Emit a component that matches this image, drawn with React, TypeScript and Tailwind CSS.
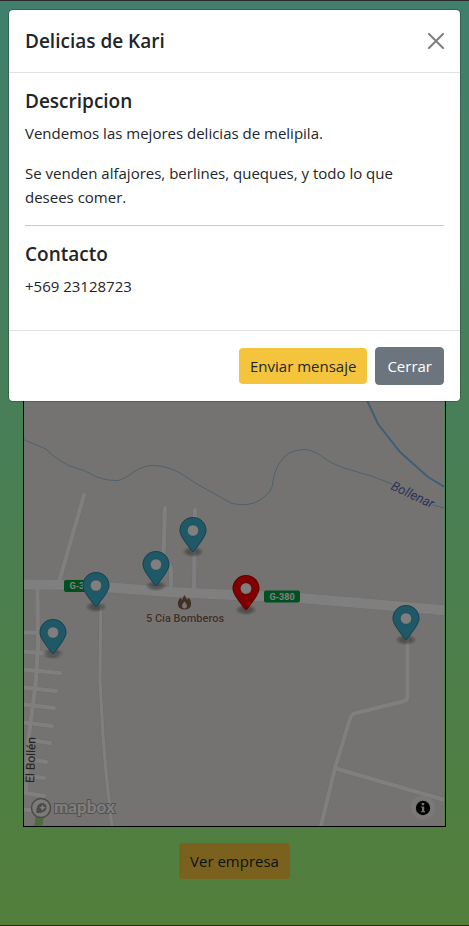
import React from "react";

const MARKERS = [
  { x: 179.5, y: 517, color: "#3fb1ce" },
  { x: 142.5, y: 551, color: "#3fb1ce" },
  { x: 82.5, y: 572, color: "#3fb1ce" },
  { x: 232.5, y: 575, color: "#ff0000" },
  { x: 392.5, y: 605, color: "#3fb1ce" },
  { x: 39.5, y: 619, color: "#3fb1ce" },
];

const ROADS = [
  { d: "M84 495 L59 582", w: 4 },
  { d: "M165 508 L163.500 556 L168 563 Q171 566 171 571 L171 590", w: 4 },
  { d: "M195 510 L194 590", w: 4 },
  { d: "M101 590 L100 680 L103 735 L106 772 L112 828", w: 3 },
  { d: "M37.500 588 L38 645 L36 680 L32 712 L28 742 L26 790", w: 4 },
  { d: "M20 632 L40 633", w: 4 },
  { d: "M20 651 L60 655", w: 4 },
  { d: "M20 669 L60 673", w: 4 },
  { d: "M20 687 L56 691", w: 4 },
  { d: "M20 704 L54 708", w: 4 },
  { d: "M20 722 L52 726", w: 4 },
  { d: "M30 740 L50 743", w: 4 },
  { d: "M28 759 L46 762", w: 4 },
  { d: "M28 776 L44 778", w: 4 },
  { d: "M20 792 L44 796", w: 4 },
  { d: "M20 809 L30 810", w: 4 },
  { d: "M407.500 612 L407.500 695 Q408 700 403 701.500 L356 713 Q351 714 350 719 L335 768 L320 830", w: 4 },
  { d: "M336 768.500 L448 801", w: 4 },
  { d: "M20 584.500 L80 585 L130 589 L170 592 L300 598 L448 610.500", w: 10 },
];

function Marker({ x, y, color }: { x: number; y: number; color: string }) {
  return (
    <g transform={`translate(${x} ${y})`}>
      {[10.5, 9.5, 8.5, 7.5, 6.5, 5.5].map((r) => (
        <ellipse key={r} cx="13.5" cy="34.8" rx={r} ry={r / 2} fill="#000" opacity="0.06" />
      ))}
      <path
        fill={color}
        d="M27 13.500C27 19.070 20.250 27 14.750 34.500C14.020 35.500 12.980 35.500 12.250 34.500C6.750 27 0 19.220 0 13.500C0 6.040 6.040 0 13.500 0C20.960 0 27 6.040 27 13.500Z"
      />
      <path
        fill="none"
        stroke="#000"
        strokeOpacity="0.25"
        d="M26.500 13.500C26.500 18.800 20 26.500 14.350 34.200C13.900 34.800 13.100 34.800 12.650 34.200C7 26.500 .5 18.900 .5 13.500C.5 6.300 6.300 .5 13.500 .5C20.700 .5 26.500 6.300 26.500 13.500Z"
      />
      <circle cx="13.500" cy="13.500" r="5.500" fill="#fff" stroke="#000" strokeOpacity="0.15" />
    </g>
  );
}

function Shield({ x, y }: { x: number; y: number }) {
  return (
    <g>
      <rect x={x} y={y} width="36" height="12" rx="2" fill="#00a042" />
      <text
        x={x + 18}
        y={y + 9}
        textAnchor="middle"
        fill="#fff"
        fontSize="9"
        fontWeight="700"
        className="font-[Roboto,sans-serif]"
      >
        G-380
      </text>
    </g>
  );
}

function MapView() {
  return (
    <svg
      viewBox="24 326 420 500"
      preserveAspectRatio="xMidYMax slice"
      className="block h-[500px] w-full bg-[#eae6e2]"
      role="img"
      aria-label="Mapa"
    >
      <g fill="none" strokeLinecap="round" strokeLinejoin="round">
        <path
          stroke="#9cc3dc"
          d="M20 438L46 449C54 457 60 461 70 466L84 470.500L97 477Q109 481 118 480.500Q125 479 135 471Q145 465 155 465.500Q167 466 180 473L197 484L232 503.500Q250 507 260 500Q273 492 273 481Q275 467 284 457Q293 449 306 449.500Q316 451 327 460Q335 465 344 468L373 476.500L392 484M433 505L448 509"
        />
        <path stroke="#80bce4" strokeWidth="2" d="M364 394L378 424L400 452L428 477L448 489" />
        <path stroke="#9cd67c" strokeWidth="8" strokeLinecap="butt" d="M40 812L38 830" />
        {ROADS.map((r) => (
          <path key={r.d} d={r.d} stroke="#dadae2" strokeWidth={r.w + 1} />
        ))}
        {ROADS.map((r) => (
          <path key={r.d} d={r.d} stroke="#fff" strokeWidth={r.w} />
        ))}
      </g>

      <g className="font-[Roboto,sans-serif]">
        <text
          transform="translate(390 489) rotate(25)"
          fontSize="13"
          fontStyle="italic"
          fill="#5868b8"
        >
          Bollenar
        </text>
        <text
          transform="translate(34 783) rotate(-88)"
          fontSize="12"
          fill="#444"
          stroke="#eae6e2"
          strokeWidth="1"
          paintOrder="stroke"
        >
          El Bollén
        </text>
        <text
          x="185"
          y="622"
          textAnchor="middle"
          fontSize="11"
          fontWeight="500"
          fill="#84604c"
          stroke="#f0ece8"
          strokeWidth="2"
          paintOrder="stroke"
        >
          5 Cía Bomberos
        </text>
      </g>

      <path
        fill="#84604c"
        fillRule="evenodd"
        d="M184.500 595C185.500 596.500 186.500 598 187 600L188.500 597.500C190.500 600 191.500 602 191 605C190.500 608 188 609.500 184.500 609.500C181 609.500 178.500 608 178 605C177.500 602 178.500 600 180.500 597.500L182 600C182.500 598 183.500 596.500 184.500 595ZM184.500 601.500C183 603.500 182 604.500 182 606C182 607.500 183 608.500 184.500 608.500C186 608.500 187 607.500 187 606C187 604.500 186 603.500 184.500 601.500Z"
      />

      <Shield x={64} y={580} />
      <Shield x={264} y={590.5} />
      {MARKERS.map((m) => (
        <Marker key={m.x} {...m} />
      ))}

      <g>
        <circle cx="41" cy="808" r="9.500" fill="#f8f6f4" stroke="#989694" strokeWidth="1.500" />
        <path
          fill="#989694"
          d="M36.500 813C36 808.500 37 803.500 42 803C45 803 46.500 805 46.500 807.500C46.500 812 41 813.500 36.500 813Z"
        />
        <path fill="#fff" d="M42.500 804.500L43.500 806.800L45.800 807.800L43.500 808.800L42.500 811L41.500 808.800L39.200 807.800L41.500 806.800Z" />
        <text
          x="54"
          y="813"
          fontSize="17"
          fontWeight="900"
          fill="#ffffff"
          stroke="#a6a4a2"
          strokeWidth="2"
          strokeLinejoin="round"
          paintOrder="stroke"
          className="font-[Lato,sans-serif]"
        >
          mapbox
        </text>
      </g>

      <g>
        <circle cx="423" cy="807.500" r="12" fill="#fff" fillOpacity="0.5" />
        <circle cx="423" cy="808" r="7.200" fill="#000" />
        <path fill="#e8e6e4" d="M421.800 803H424.200V805.200H421.800ZM421.200 806.500H424.200V811H425V812.200H421.200V811H422V807.500H421.200Z" />
      </g>
    </svg>
  );
}

function CompanyModal() {
  return (
    <div
      role="dialog"
      aria-modal="true"
      aria-labelledby="modal-title"
      className="mx-2 mt-2 rounded-[5px] border border-black/20 bg-white bg-clip-padding text-[#212529]"
    >
      <header className="flex items-center justify-between border-b border-[#dee2e6] p-4">
        <h1 id="modal-title" className="text-[19px] leading-[30px] font-semibold">
          Delicias de Kari
        </h1>
        <button type="button" aria-label="Cerrar ventana" className="text-[#7f7f7f]">
          <svg viewBox="0 0 16 16" className="h-4 w-4" fill="none" stroke="currentColor" strokeWidth="2" strokeLinecap="round">
            <path d="M1 1L15 15M15 1L1 15" />
          </svg>
        </button>
      </header>

      <div className="p-4 text-[15px] leading-6">
        <h2 className="mb-2 text-[19px] leading-6 font-semibold">Descripcion</h2>
        <p className="mb-4">Vendemos las mejores delicias de melipila.</p>
        <p className="mb-4">Se venden alfajores, berlines, queques, y todo lo que desees comer.</p>
        <hr className="mb-4 border-[#c8c8c9]" />
        <h2 className="mb-2 text-[19px] leading-6 font-semibold">Contacto</h2>
        <p className="mb-4">+569 23128723</p>
      </div>

      <footer className="flex items-center justify-end gap-2 border-t border-[#dee2e6] p-4 text-[15px] leading-6">
        <button type="button" className="rounded bg-[#f4c53c] px-[11px] py-1.5">
          Enviar mensaje
        </button>
        <button type="button" className="rounded border border-[#6c757d] bg-[#6c757d] px-[11px] py-1.5 text-white">
          Cerrar
        </button>
      </footer>
    </div>
  );
}

export default function App() {
  return (
    <div className="relative min-h-screen font-['Open_Sans','Noto_Sans',sans-serif]">
      <main className="flex min-h-screen flex-col items-center justify-end border-y border-[#545258] bg-linear-to-b from-[#7fffd8] to-[#a6ff76] px-[23px] pb-[46px]">
        <div className="w-full border border-black pr-px">
          <MapView />
        </div>
        <button type="button" className="mt-4 rounded bg-[#f4c53c] px-[11px] py-1.5 text-[15px] leading-6 text-[#212529]">
          Ver empresa
        </button>
      </main>
      <div className="absolute inset-0 bg-black/50 pt-px">
        <CompanyModal />
      </div>
    </div>
  );
}
